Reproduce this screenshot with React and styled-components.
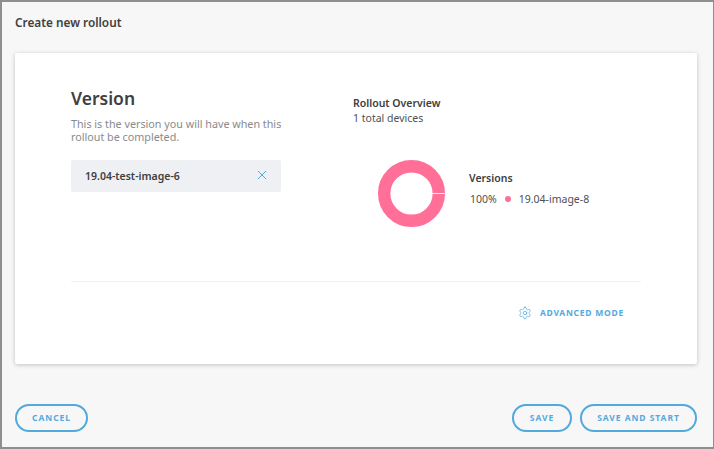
import React from 'react';
import styled, { createGlobalStyle } from 'styled-components';

const Global = createGlobalStyle`
  html, body { margin: 0; padding: 0; }
  * { box-sizing: border-box; }
  body { font-family: "Noto Sans", "Open Sans", sans-serif; }
`;
const Frame = styled.div`
  width: 714px; height: 449px; background: #f7f7f7;
  border: solid #8f8f8f; border-width: 2px 1px 2px 2px;
  display: flex; flex-direction: column; padding: 0 16px 0 13px; overflow: hidden;
`;
const Title = styled.h1`
  margin: 0; height: 51px; padding-top: 12px;
  font-size: 11.8px; line-height: 17px; font-weight: 600; color: #404041;
`;
const Card = styled.main`
  height: 311px; background: #fff; border-radius: 2px;
  box-shadow: 0 1px 4px rgba(0,0,0,.22);
  padding: 33px 56px 0 56px; display: flex; flex-direction: column;
`;
const Columns = styled.div`
  display: flex; height: 196px; border-bottom: 1px solid #f3f3f3;
`;
const Left = styled.section`
  width: 282px; display: flex; flex-direction: column;
`;
const Heading = styled.h2`
  margin: 0 0 8px; font-size: 17.5px; line-height: 24px; font-weight: 600; color: #404041;
`;
const Help = styled.p`
  margin: 0 0 16px; width: 220px; font-size: 10.75px; line-height: 13px; color: #8a8a8d;
`;
const Chip = styled.div`
  width: 210px; height: 32px; background: #eff0f4; border-radius: 2px;
  display: flex; align-items: center; justify-content: space-between; padding: 0 14px;
  font-size: 10.5px; font-weight: 600; color: #404041;
`;
const Right = styled.section`
  display: flex; flex-direction: column; padding-top: 10px;
`;
const OverviewTitle = styled.div`
  font-size: 10.5px; line-height: 15px; font-weight: 600; color: #404041;
`;
const Devices = styled.div`
  font-size: 10.5px; line-height: 15px; color: #4f4f52;
`;
const Chart = styled.div`
  display: flex; align-items: center; margin: 34px 0 0 25px;
`;
const Legend = styled.div`
  margin-left: 24px; margin-top: -10px;
`;
const LegendTitle = styled.div`
  font-size: 10.5px; line-height: 14px; font-weight: 600; color: #404041; margin-bottom: 7px;
`;
const LegendRow = styled.div`
  display: flex; align-items: center; margin-left: 1px;
  font-size: 10.5px; line-height: 14px; color: #4f4f52;
`;
const Dot = styled.span`
  width: 6px; height: 6px; border-radius: 50%; background: #ff6f98; margin: 0 8px 0 8px;
`;
const Advanced = styled.div`
  display: flex; justify-content: flex-end; align-items: center; gap: 8px;
  height: 61px; padding-right: 17px;
  font-size: 8.5px; font-weight: 700; letter-spacing: 0.75px; color: #54aade;
`;
const Footer = styled.footer`
  display: flex; justify-content: space-between; margin-top: 40px;
`;
const Actions = styled.div`
  display: flex; gap: 8px;
`;
const Button = styled.button`
  height: 28px; width: ${p => p.$w}px; background: transparent; padding: 0 0 1px;
  border: 2px solid #51a9dc; border-radius: 14px; cursor: pointer;
  font-family: inherit; font-size: 8.5px; font-weight: 700; letter-spacing: 0.95px; color: #54aade;
`;

const Gear = () => (
  <svg width="14" height="14" viewBox="0 0 24 24" fill="none" stroke="#54aade" strokeWidth="1.3" strokeLinecap="round" strokeLinejoin="round">
    <path d="M12.22 2h-.44a2 2 0 0 0-2 2v.18a2 2 0 0 1-1 1.73l-.43.25a2 2 0 0 1-2 0l-.15-.08a2 2 0 0 0-2.73.73l-.22.38a2 2 0 0 0 .73 2.73l.15.1a2 2 0 0 1 1 1.72v.51a2 2 0 0 1-1 1.74l-.15.09a2 2 0 0 0-.73 2.73l.22.38a2 2 0 0 0 2.73.73l.15-.08a2 2 0 0 1 2 0l.43.25a2 2 0 0 1 1 1.73V20a2 2 0 0 0 2 2h.44a2 2 0 0 0 2-2v-.18a2 2 0 0 1 1-1.73l.43-.25a2 2 0 0 1 2 0l.15.08a2 2 0 0 0 2.73-.73l.22-.39a2 2 0 0 0-.73-2.73l-.15-.08a2 2 0 0 1-1-1.74v-.5a2 2 0 0 1 1-1.74l.15-.09a2 2 0 0 0 .73-2.73l-.22-.38a2 2 0 0 0-2.73-.73l-.15.08a2 2 0 0 1-2 0l-.43-.25a2 2 0 0 1-1-1.73V4a2 2 0 0 0-2-2z" />
    <circle cx="12" cy="12" r="3" />
  </svg>
);
const Close = () => (
  <svg width="10" height="10" viewBox="0 0 10 10" fill="none" stroke="#54aade" strokeWidth="1" style={{ marginTop: -3 }}>
    <path d="M1 1l8 8M9 1l-8 8" />
  </svg>
);
const Donut = () => (
  <svg width="67" height="67" viewBox="0 0 67 67">
    <circle cx="33.5" cy="33.5" r="27.3" fill="none" stroke="#ff6f98" strokeWidth="12.4" />
    <rect x="54" y="33" width="13" height="1" fill="#ffe4ec" />
  </svg>
);

export default function App() {
  return (
    <Frame>
      <Global />
      <Title>Create new rollout</Title>
      <Card>
        <Columns>
          <Left>
            <Heading>Version</Heading>
            <Help>This is the version you will have when this rollout be completed.</Help>
            <Chip>19.04-test-image-6<Close /></Chip>
          </Left>
          <Right>
            <OverviewTitle>Rollout Overview</OverviewTitle>
            <Devices>1 total devices</Devices>
            <Chart>
              <Donut />
              <Legend>
                <LegendTitle>Versions</LegendTitle>
                <LegendRow>100%<Dot />19.04-image-8</LegendRow>
              </Legend>
            </Chart>
          </Right>
        </Columns>
        <Advanced><Gear />ADVANCED MODE</Advanced>
      </Card>
      <Footer>
        <Button $w={73}>CANCEL</Button>
        <Actions>
          <Button $w={60}>SAVE</Button>
          <Button $w={117}>SAVE AND START</Button>
        </Actions>
      </Footer>
    </Frame>
  );
}
